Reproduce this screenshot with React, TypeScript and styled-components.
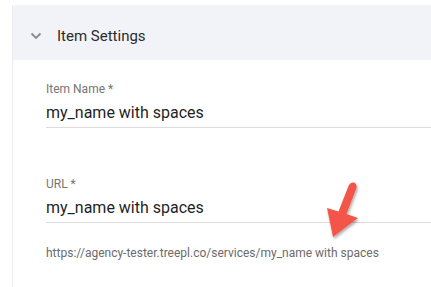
import styled, { createGlobalStyle } from 'styled-components';

const GlobalStyle = createGlobalStyle`
  html, body {
    margin: 0;
    padding: 0;
    background: #fff;
    font-family: Roboto, "Liberation Sans", sans-serif;
  }
`;

const Page = styled.div`
  width: 431px;
  height: 287px;
  padding: 5px 0 0 12px;
  box-sizing: border-box;
  overflow: hidden;
  position: relative;
`;

const Panel = styled.div`
  border-left: 1px solid #ececef;
  height: 100%;
`;

const Header = styled.div`
  display: flex;
  align-items: center;
  height: 55px;
  box-sizing: border-box;
  padding: 6px 0 0 17px;
  background: #f2f3f8;
  border-top-left-radius: 3px;
  gap: 15px;
`;

const HeaderTitle = styled.span`
  font-size: 15px;
  color: #2b2b2b;
`;

const Body = styled.div`
  padding: 22px 0 0 33px;
`;

const Field = styled.div`
  margin-bottom: 49px;

  &:last-child {
    margin-bottom: 0;
  }
`;

const Label = styled.div`
  font-size: 12px;
  color: #757575;
  line-height: 14px;
  margin-bottom: 6px;
`;

const Value = styled.div`
  font-size: 16px;
  color: #1f1f1f;
  line-height: 22px;
  padding-bottom: 3px;
  border-bottom: 1px solid #dcdcdc;
`;

const Hint = styled.div`
  font-size: 12px;
  line-height: 14px;
  color: #6b6b6b;
  margin-top: 23px;
`;

const Arrow = styled.svg`
  position: absolute;
  left: 318px;
  top: 174px;
  overflow: visible;
`;

const Chevron = () => (
  <svg width="12" height="8" viewBox="0 0 12 8">
    <path d="M1.5 1.5 L6 6 L10.5 1.5" fill="none" stroke="#8a8a8a" strokeWidth="1.8" />
  </svg>
);

export default function App() {
  return (
    <>
      <GlobalStyle />
      <Page>
        <Panel>
          <Header>
            <Chevron />
            <HeaderTitle>Item Settings</HeaderTitle>
          </Header>
          <Body>
            <Field>
              <Label>Item Name *</Label>
              <Value>my_name with spaces</Value>
            </Field>
            <Field>
              <Label>URL *</Label>
              <Value>my_name with spaces</Value>
              <Hint>https://agency-tester.treepl.co/services/my_name with spaces</Hint>
            </Field>
          </Body>
        </Panel>
        <Arrow width="60" height="70" viewBox="0 0 60 70">
          <defs>
            <filter id="sh" x="-30%" y="-30%" width="160%" height="160%">
              <feDropShadow dx="1" dy="2" stdDeviation="1.5" floodColor="#000" floodOpacity="0.35" />
            </filter>
          </defs>
          <g filter="url(#sh)">
            <path
              d="M30.5 12 C32.5 6.5 39.5 7.5 38.5 14 L28.5 40 L40 44 L15 63 L9 34 L20.5 37.5 Z"
              fill="#f4544a"
            />
          </g>
        </Arrow>
      </Page>
    </>
  );
}
